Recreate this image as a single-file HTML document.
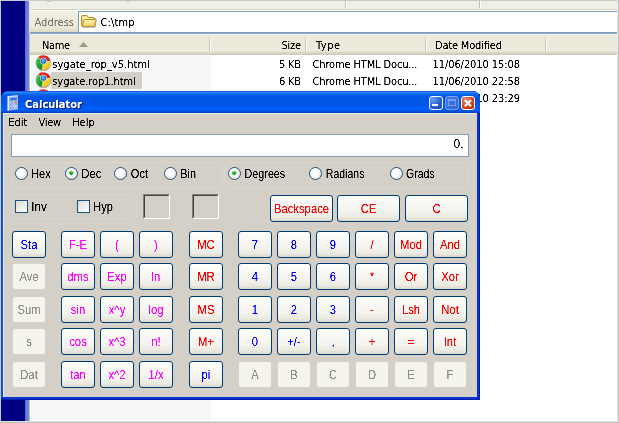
<!DOCTYPE html>
<html><head><meta charset="utf-8"><title>Calculator</title>
<style>
html,body{margin:0;padding:0;background:#fff}
body{width:619px;height:423px;position:relative;overflow:hidden}
div{position:absolute}
text{white-space:pre}
</style></head>
<body>
<div style="left:0px;top:0px;width:619px;height:423px;background:#fff"></div>
<div style="left:1px;top:1px;width:24px;height:420px;background:#000080"></div>
<div style="left:25px;top:1px;width:4px;height:420px;background:linear-gradient(90deg,#5a69ce,#7b8ede)"></div>
<div style="left:29px;top:1px;width:1px;height:420px;background:#b4bce8"></div>
<div style="left:29px;top:1px;width:1px;height:33px;background:#dfe0ea"></div>
<div style="left:30px;top:1px;width:587px;height:8px;background:#efefe4"></div>
<div style="left:345px;top:1px;width:1px;height:7px;background:#c5c2b2"></div>
<div style="left:346px;top:1px;width:1px;height:7px;background:#fff"></div>
<div style="left:479px;top:1px;width:1px;height:7px;background:#c5c2b2"></div>
<div style="left:480px;top:1px;width:1px;height:7px;background:#fff"></div>
<div style="left:47px;top:1px;width:4px;height:1px;background:#c4d0bc"></div>
<div style="left:126px;top:1px;width:4px;height:1px;background:#d0d0c4"></div>
<div style="left:30px;top:9px;width:587px;height:1px;background:#d6d2bd"></div>
<div style="left:30px;top:10px;width:587px;height:1px;background:#fff"></div>
<div style="left:30px;top:11px;width:587px;height:21px;background:linear-gradient(#f1efe2,#ece9d8 75%,#ddd9c3)"></div>
<div style="left:78px;top:11px;width:540px;height:22px;background:#fff;border:1px solid #7f9db9;box-sizing:border-box"></div>
<div style="left:30px;top:32px;width:587px;height:1px;background:#7f9db9"></div>
<div style="left:30px;top:33px;width:587px;height:1px;background:#8eaac6"></div>
<div style="left:30px;top:34px;width:587px;height:1px;background:#f5f4ee"></div>
<div style="left:30px;top:35px;width:587px;height:20px;background:linear-gradient(#ebeadb 0,#ebeadb 80%,#e0ddcb 85%,#d6d2c2 92%,#cbc7b8 100%)"></div>
<div style="left:209px;top:38px;width:1px;height:13px;background:#c7c5b2"></div>
<div style="left:210px;top:38px;width:1px;height:13px;background:#fff"></div>
<div style="left:305px;top:38px;width:1px;height:13px;background:#c7c5b2"></div>
<div style="left:306px;top:38px;width:1px;height:13px;background:#fff"></div>
<div style="left:425px;top:38px;width:1px;height:13px;background:#c7c5b2"></div>
<div style="left:426px;top:38px;width:1px;height:13px;background:#fff"></div>
<div style="left:545px;top:38px;width:1px;height:13px;background:#c7c5b2"></div>
<div style="left:546px;top:38px;width:1px;height:13px;background:#fff"></div>
<div style="left:31px;top:55px;width:180px;height:366px;background:#f7f7f7"></div>
<div style="left:51px;top:72px;width:91px;height:17px;background:#d4d0c8"></div>
<svg width="619" height="423" style="position:absolute;left:0;top:0" font-family='"DejaVu Sans Condensed","Liberation Sans",sans-serif'>
<defs><filter id="fa" x="0" y="0" width="619" height="423" filterUnits="userSpaceOnUse" color-interpolation-filters="sRGB"><feComponentTransfer><feFuncA type="linear" slope="2.5" intercept="-0.6"/></feComponentTransfer></filter></defs>
<defs><linearGradient id="fg" x1="0" y1="0" x2="0.3" y2="1"><stop offset="0" stop-color="#fffbd6"/><stop offset="1" stop-color="#f3d25c"/></linearGradient><filter id="blur1" x="-30%" y="-30%" width="160%" height="160%"><feGaussianBlur stdDeviation="0.7"/></filter></defs>
<path d="M83.5 18 L95.5 18 Q97 19 96.5 21 L95.5 27.5 L83 27.8 Z" fill="#5a5a78" opacity="0.55" filter="url(#blur1)"/>
<path d="M81.5 17 L81.5 25.5 Q81.5 26.5 82.5 26.5 L94 26.5 L94 18.5 Q94 17.5 93 17.5 L88.5 17.5 L87 15.5 L82.5 15.5 Q81.5 15.5 81.5 16.5 Z" fill="#f0cf60" stroke="#b8891c" stroke-width="1"/>
<path d="M82.5 16.5 L86.7 16.5 L88 18.5 L93 18.5 L93 19.5 L82.5 19.5 Z" fill="#fff4b8"/>
<path d="M84.3 19.5 L95.3 19.5 Q96.3 19.5 96 20.5 L94.6 25.8 Q94.4 26.5 93.6 26.5 L82.4 26.5 Z" fill="url(#fg)" stroke="#bf9526" stroke-width="1"/>
<path d="M79 47 L83.5 42 L88 47 Z" fill="#9d9a8c"/>
<defs><filter id="blur2" x="-30%" y="-30%" width="160%" height="160%"><feGaussianBlur stdDeviation="0.6"/></filter><linearGradient id="cr" x1="0" y1="0" x2="0" y2="1"><stop offset="0" stop-color="#f0302a"/><stop offset="1" stop-color="#c80c0c"/></linearGradient><linearGradient id="cg" x1="0" y1="0" x2="1" y2="0.6"><stop offset="0" stop-color="#7fd06a"/><stop offset="0.45" stop-color="#2fae3a"/><stop offset="1" stop-color="#168a2a"/></linearGradient><linearGradient id="cy" x1="0" y1="0" x2="0.6" y2="1"><stop offset="0" stop-color="#fbe23a"/><stop offset="1" stop-color="#efc010"/></linearGradient><radialGradient id="cb" cx="0.4" cy="0.35" r="0.7"><stop offset="0" stop-color="#7cc4ff"/><stop offset="1" stop-color="#1f78e0"/></radialGradient></defs>
<g transform="translate(43.2,62.7)"><ellipse cx="0.3" cy="0.9" rx="7.7" ry="7.5" fill="#777" opacity="0.6" filter="url(#blur2)"/><path d="M0.2 -1.6 L-5.41 -5.05 A7.4 7.4 0 0 1 7.24 -1.54 Z" fill="url(#cr)"/><path d="M0.2 -1.6 L-5.41 -5.05 A7.4 7.4 0 0 0 -1.03 7.33 Z" fill="url(#cg)"/><path d="M0.2 -1.6 L-1.03 7.33 A7.4 7.4 0 0 0 7.24 -1.54 Z" fill="url(#cy)"/><path d="M0.2 -1.6 L-5.41 -5.05 M0.2 -1.6 L7.24 -1.54 M0.2 -1.6 L-1.03 7.33" stroke="#e8e8e0" stroke-width="0.7" opacity="0.8"/><circle cx="0.2" cy="-1.6" r="3.3" fill="#dfe6ea"/><circle cx="0.2" cy="-1.6" r="2.7" fill="#1c4fa8"/><circle cx="0.2" cy="-1.6" r="2.1" fill="url(#cb)"/></g>
<g transform="translate(43.2,79.7)"><ellipse cx="0.3" cy="0.9" rx="7.7" ry="7.5" fill="#777" opacity="0.6" filter="url(#blur2)"/><path d="M0.2 -1.6 L-5.41 -5.05 A7.4 7.4 0 0 1 7.24 -1.54 Z" fill="url(#cr)"/><path d="M0.2 -1.6 L-5.41 -5.05 A7.4 7.4 0 0 0 -1.03 7.33 Z" fill="url(#cg)"/><path d="M0.2 -1.6 L-1.03 7.33 A7.4 7.4 0 0 0 7.24 -1.54 Z" fill="url(#cy)"/><path d="M0.2 -1.6 L-5.41 -5.05 M0.2 -1.6 L7.24 -1.54 M0.2 -1.6 L-1.03 7.33" stroke="#e8e8e0" stroke-width="0.7" opacity="0.8"/><circle cx="0.2" cy="-1.6" r="3.3" fill="#dfe6ea"/><circle cx="0.2" cy="-1.6" r="2.7" fill="#1c4fa8"/><circle cx="0.2" cy="-1.6" r="2.1" fill="url(#cb)"/></g>
<g transform="translate(43.2,96.7)"><ellipse cx="0.3" cy="0.9" rx="7.7" ry="7.5" fill="#777" opacity="0.6" filter="url(#blur2)"/><path d="M0.2 -1.6 L-5.41 -5.05 A7.4 7.4 0 0 1 7.24 -1.54 Z" fill="url(#cr)"/><path d="M0.2 -1.6 L-5.41 -5.05 A7.4 7.4 0 0 0 -1.03 7.33 Z" fill="url(#cg)"/><path d="M0.2 -1.6 L-1.03 7.33 A7.4 7.4 0 0 0 7.24 -1.54 Z" fill="url(#cy)"/><path d="M0.2 -1.6 L-5.41 -5.05 M0.2 -1.6 L7.24 -1.54 M0.2 -1.6 L-1.03 7.33" stroke="#e8e8e0" stroke-width="0.7" opacity="0.8"/><circle cx="0.2" cy="-1.6" r="3.3" fill="#dfe6ea"/><circle cx="0.2" cy="-1.6" r="2.7" fill="#1c4fa8"/><circle cx="0.2" cy="-1.6" r="2.1" fill="url(#cb)"/></g>
<g filter="url(#fa)">
<text x="34.5" y="26.2" font-size="11" fill="#7f7c73" textLength="39.5" lengthAdjust="spacing">Address</text>
<text x="100.5" y="26.2" font-size="11" fill="#000" textLength="34" lengthAdjust="spacing">C:\tmp</text>
<text x="42" y="48.7" font-size="11" fill="#000" textLength="28" lengthAdjust="spacing">Name</text>
<text x="281.5" y="48.7" font-size="11" fill="#000" textLength="19.5" lengthAdjust="spacing">Size</text>
<text x="316" y="48.7" font-size="11" fill="#000" textLength="24" lengthAdjust="spacing">Type</text>
<text x="435" y="48.7" font-size="11" fill="#000" textLength="67" lengthAdjust="spacing">Date Modified</text>
<text x="52.3" y="67.7" font-size="11" fill="#000" textLength="97.5" lengthAdjust="spacing">sygate_rop_v5.html</text>
<text x="279" y="67.7" font-size="11" fill="#000" textLength="22" lengthAdjust="spacing">5 KB</text>
<text x="312.5" y="67.7" font-size="11" fill="#000" textLength="105" lengthAdjust="spacing">Chrome HTML Docu...</text>
<text x="432.5" y="67.7" font-size="11" fill="#000" textLength="87.5" lengthAdjust="spacing">11/06/2010 15:08</text>
<text x="52.3" y="84.7" font-size="11" fill="#000" textLength="83.5" lengthAdjust="spacing">sygate.rop1.html</text>
<text x="279" y="84.7" font-size="11" fill="#000" textLength="22" lengthAdjust="spacing">6 KB</text>
<text x="312.5" y="84.7" font-size="11" fill="#000" textLength="105" lengthAdjust="spacing">Chrome HTML Docu...</text>
<text x="432.5" y="84.7" font-size="11" fill="#000" textLength="87.5" lengthAdjust="spacing">11/06/2010 22:58</text>
<text x="432.5" y="101.7" font-size="11" fill="#000" textLength="87.5" lengthAdjust="spacing">11/06/2010 23:29</text>
</g>
</svg>
<div style="left:1px;top:91px;width:479px;height:309px;background:#0831d9;border-radius:7px 7px 0 0"></div>
<div style="left:479px;top:99px;width:1px;height:301px;background:#001ea0"></div>
<div style="left:1px;top:399px;width:479px;height:1px;background:#001ea0"></div>
<div style="left:1px;top:113px;width:2px;height:285px;background:#0851e4"></div>
<div style="left:1px;top:91px;width:479px;height:22px;border-radius:7px 7px 0 0;background:linear-gradient(#0048d8 0%,#3488f8 6%,#1a76f8 10%,#0560ea 18%,#0054e3 30%,#0055e6 55%,#005cf3 75%,#0060f5 85%,#0050dd 93%,#0042c0 100%)"></div>
<div style="left:3px;top:113px;width:474px;height:284px;background:#d4d0c8;box-sizing:border-box;border-left:1px solid #ece9d8;border-top:1px solid #ece9d8"></div>
<div style="left:429px;top:96px;width:14px;height:14px;background:radial-gradient(circle at 25% 20%,#6a9ff8,#2a5fe0 55%,#1a45c0);border:1px solid #fff;border-radius:3px;box-sizing:border-box"></div>
<div style="left:445px;top:96px;width:14px;height:14px;background:linear-gradient(135deg,#3e7ef0,#2a63d8);border:1px solid #7f9fee;border-radius:3px;box-sizing:border-box"></div>
<div style="left:461px;top:96px;width:14px;height:14px;background:radial-gradient(circle at 30% 25%,#e88a6a,#d8441c 55%,#b02a08);border:1px solid #fff;border-radius:3px;box-sizing:border-box"></div>
<div style="left:432px;top:104px;width:5.5px;height:2px;background:#fff"></div>
<div style="left:448px;top:99px;width:8px;height:7px;border:1px solid #7f9fe8;border-top-width:2px;box-sizing:border-box"></div>
<svg width="14" height="14" style="position:absolute;left:461px;top:96px"><path d="M3.8 4.1 L10.1 10.2 M10.1 4.1 L3.8 10.2" stroke="#fff" stroke-width="2.1" fill="none"/></svg>
<div style="left:11px;top:134px;width:458px;height:23px;background:#fff;border:1px solid #7f9db9;box-sizing:border-box"></div>
<div style="left:11px;top:161.5px;width:212px;height:26px;border:1px solid #d9d7c9;border-radius:4px;box-sizing:border-box"></div>
<div style="left:224px;top:161.5px;width:245px;height:26px;border:1px solid #d9d7c9;border-radius:4px;box-sizing:border-box"></div>
<div style="left:12px;top:194px;width:125px;height:25px;border:1px solid #d9d7c9;border-radius:4px;box-sizing:border-box"></div>
<div style="left:143px;top:194px;width:27px;height:25px;box-sizing:border-box;border:1px solid;border-color:#808080 #fff #fff #808080"></div>
<div style="left:144px;top:195px;width:25px;height:23px;box-sizing:border-box;border:1px solid;border-color:#404040 #d4d0c8 #d4d0c8 #404040"></div>
<div style="left:192px;top:194px;width:27px;height:25px;box-sizing:border-box;border:1px solid;border-color:#808080 #fff #fff #808080"></div>
<div style="left:193px;top:195px;width:25px;height:23px;box-sizing:border-box;border:1px solid;border-color:#404040 #d4d0c8 #d4d0c8 #404040"></div>
<div style="left:15.0px;top:167.0px;width:13px;height:13px;border-radius:50%;border:1px solid #1d5180;box-sizing:border-box;background:radial-gradient(circle at 35% 35%,#fff 35%,#dddbd0 100%)"></div>
<div style="left:65.0px;top:167.0px;width:13px;height:13px;border-radius:50%;border:1px solid #1d5180;box-sizing:border-box;background:radial-gradient(circle at 35% 35%,#fff 35%,#dddbd0 100%)"></div>
<div style="left:69.3px;top:171.3px;width:4.4px;height:4.4px;border-radius:1px;transform:rotate(45deg);background:linear-gradient(135deg,#8fe87c,#2bb52b 45%,#1f9f1f)"></div>
<div style="left:114.0px;top:167.0px;width:13px;height:13px;border-radius:50%;border:1px solid #1d5180;box-sizing:border-box;background:radial-gradient(circle at 35% 35%,#fff 35%,#dddbd0 100%)"></div>
<div style="left:164.0px;top:167.0px;width:13px;height:13px;border-radius:50%;border:1px solid #1d5180;box-sizing:border-box;background:radial-gradient(circle at 35% 35%,#fff 35%,#dddbd0 100%)"></div>
<div style="left:228.0px;top:167.0px;width:13px;height:13px;border-radius:50%;border:1px solid #1d5180;box-sizing:border-box;background:radial-gradient(circle at 35% 35%,#fff 35%,#dddbd0 100%)"></div>
<div style="left:232.3px;top:171.3px;width:4.4px;height:4.4px;border-radius:1px;transform:rotate(45deg);background:linear-gradient(135deg,#8fe87c,#2bb52b 45%,#1f9f1f)"></div>
<div style="left:309.0px;top:167.0px;width:13px;height:13px;border-radius:50%;border:1px solid #1d5180;box-sizing:border-box;background:radial-gradient(circle at 35% 35%,#fff 35%,#dddbd0 100%)"></div>
<div style="left:390.0px;top:167.0px;width:13px;height:13px;border-radius:50%;border:1px solid #1d5180;box-sizing:border-box;background:radial-gradient(circle at 35% 35%,#fff 35%,#dddbd0 100%)"></div>
<div style="left:15px;top:200px;width:13px;height:13px;border:1px solid #1d5180;box-sizing:border-box;background:linear-gradient(135deg,#dcdcd4,#fff)"></div>
<div style="left:77px;top:200px;width:13px;height:13px;border:1px solid #1d5180;box-sizing:border-box;background:linear-gradient(135deg,#dcdcd4,#fff)"></div>
<div style="left:12px;top:231px;width:34px;height:27px;box-sizing:border-box;border:1px solid #003c74;border-radius:3px;background:linear-gradient(#fdfdfb 0%,#f5f4ef 55%,#ecebe2 85%,#dad6ca 100%)"></div>
<div style="left:61px;top:231px;width:34px;height:27px;box-sizing:border-box;border:1px solid #003c74;border-radius:3px;background:linear-gradient(#fdfdfb 0%,#f5f4ef 55%,#ecebe2 85%,#dad6ca 100%)"></div>
<div style="left:100px;top:231px;width:34px;height:27px;box-sizing:border-box;border:1px solid #003c74;border-radius:3px;background:linear-gradient(#fdfdfb 0%,#f5f4ef 55%,#ecebe2 85%,#dad6ca 100%)"></div>
<div style="left:139px;top:231px;width:34px;height:27px;box-sizing:border-box;border:1px solid #003c74;border-radius:3px;background:linear-gradient(#fdfdfb 0%,#f5f4ef 55%,#ecebe2 85%,#dad6ca 100%)"></div>
<div style="left:189px;top:231px;width:34px;height:27px;box-sizing:border-box;border:1px solid #003c74;border-radius:3px;background:linear-gradient(#fdfdfb 0%,#f5f4ef 55%,#ecebe2 85%,#dad6ca 100%)"></div>
<div style="left:238px;top:231px;width:34px;height:27px;box-sizing:border-box;border:1px solid #003c74;border-radius:3px;background:linear-gradient(#fdfdfb 0%,#f5f4ef 55%,#ecebe2 85%,#dad6ca 100%)"></div>
<div style="left:277px;top:231px;width:34px;height:27px;box-sizing:border-box;border:1px solid #003c74;border-radius:3px;background:linear-gradient(#fdfdfb 0%,#f5f4ef 55%,#ecebe2 85%,#dad6ca 100%)"></div>
<div style="left:316px;top:231px;width:34px;height:27px;box-sizing:border-box;border:1px solid #003c74;border-radius:3px;background:linear-gradient(#fdfdfb 0%,#f5f4ef 55%,#ecebe2 85%,#dad6ca 100%)"></div>
<div style="left:355px;top:231px;width:34px;height:27px;box-sizing:border-box;border:1px solid #003c74;border-radius:3px;background:linear-gradient(#fdfdfb 0%,#f5f4ef 55%,#ecebe2 85%,#dad6ca 100%)"></div>
<div style="left:394px;top:231px;width:34px;height:27px;box-sizing:border-box;border:1px solid #003c74;border-radius:3px;background:linear-gradient(#fdfdfb 0%,#f5f4ef 55%,#ecebe2 85%,#dad6ca 100%)"></div>
<div style="left:433px;top:231px;width:34px;height:27px;box-sizing:border-box;border:1px solid #003c74;border-radius:3px;background:linear-gradient(#fdfdfb 0%,#f5f4ef 55%,#ecebe2 85%,#dad6ca 100%)"></div>
<div style="left:12px;top:263px;width:34px;height:27px;box-sizing:border-box;border:1px solid #d5d3c4;border-radius:3px;background:#f5f4ea"></div>
<div style="left:61px;top:263px;width:34px;height:27px;box-sizing:border-box;border:1px solid #003c74;border-radius:3px;background:linear-gradient(#fdfdfb 0%,#f5f4ef 55%,#ecebe2 85%,#dad6ca 100%)"></div>
<div style="left:100px;top:263px;width:34px;height:27px;box-sizing:border-box;border:1px solid #003c74;border-radius:3px;background:linear-gradient(#fdfdfb 0%,#f5f4ef 55%,#ecebe2 85%,#dad6ca 100%)"></div>
<div style="left:139px;top:263px;width:34px;height:27px;box-sizing:border-box;border:1px solid #003c74;border-radius:3px;background:linear-gradient(#fdfdfb 0%,#f5f4ef 55%,#ecebe2 85%,#dad6ca 100%)"></div>
<div style="left:189px;top:263px;width:34px;height:27px;box-sizing:border-box;border:1px solid #003c74;border-radius:3px;background:linear-gradient(#fdfdfb 0%,#f5f4ef 55%,#ecebe2 85%,#dad6ca 100%)"></div>
<div style="left:238px;top:263px;width:34px;height:27px;box-sizing:border-box;border:1px solid #003c74;border-radius:3px;background:linear-gradient(#fdfdfb 0%,#f5f4ef 55%,#ecebe2 85%,#dad6ca 100%)"></div>
<div style="left:277px;top:263px;width:34px;height:27px;box-sizing:border-box;border:1px solid #003c74;border-radius:3px;background:linear-gradient(#fdfdfb 0%,#f5f4ef 55%,#ecebe2 85%,#dad6ca 100%)"></div>
<div style="left:316px;top:263px;width:34px;height:27px;box-sizing:border-box;border:1px solid #003c74;border-radius:3px;background:linear-gradient(#fdfdfb 0%,#f5f4ef 55%,#ecebe2 85%,#dad6ca 100%)"></div>
<div style="left:355px;top:263px;width:34px;height:27px;box-sizing:border-box;border:1px solid #003c74;border-radius:3px;background:linear-gradient(#fdfdfb 0%,#f5f4ef 55%,#ecebe2 85%,#dad6ca 100%)"></div>
<div style="left:394px;top:263px;width:34px;height:27px;box-sizing:border-box;border:1px solid #003c74;border-radius:3px;background:linear-gradient(#fdfdfb 0%,#f5f4ef 55%,#ecebe2 85%,#dad6ca 100%)"></div>
<div style="left:433px;top:263px;width:34px;height:27px;box-sizing:border-box;border:1px solid #003c74;border-radius:3px;background:linear-gradient(#fdfdfb 0%,#f5f4ef 55%,#ecebe2 85%,#dad6ca 100%)"></div>
<div style="left:12px;top:296px;width:34px;height:27px;box-sizing:border-box;border:1px solid #d5d3c4;border-radius:3px;background:#f5f4ea"></div>
<div style="left:61px;top:296px;width:34px;height:27px;box-sizing:border-box;border:1px solid #003c74;border-radius:3px;background:linear-gradient(#fdfdfb 0%,#f5f4ef 55%,#ecebe2 85%,#dad6ca 100%)"></div>
<div style="left:100px;top:296px;width:34px;height:27px;box-sizing:border-box;border:1px solid #003c74;border-radius:3px;background:linear-gradient(#fdfdfb 0%,#f5f4ef 55%,#ecebe2 85%,#dad6ca 100%)"></div>
<div style="left:139px;top:296px;width:34px;height:27px;box-sizing:border-box;border:1px solid #003c74;border-radius:3px;background:linear-gradient(#fdfdfb 0%,#f5f4ef 55%,#ecebe2 85%,#dad6ca 100%)"></div>
<div style="left:189px;top:296px;width:34px;height:27px;box-sizing:border-box;border:1px solid #003c74;border-radius:3px;background:linear-gradient(#fdfdfb 0%,#f5f4ef 55%,#ecebe2 85%,#dad6ca 100%)"></div>
<div style="left:238px;top:296px;width:34px;height:27px;box-sizing:border-box;border:1px solid #003c74;border-radius:3px;background:linear-gradient(#fdfdfb 0%,#f5f4ef 55%,#ecebe2 85%,#dad6ca 100%)"></div>
<div style="left:277px;top:296px;width:34px;height:27px;box-sizing:border-box;border:1px solid #003c74;border-radius:3px;background:linear-gradient(#fdfdfb 0%,#f5f4ef 55%,#ecebe2 85%,#dad6ca 100%)"></div>
<div style="left:316px;top:296px;width:34px;height:27px;box-sizing:border-box;border:1px solid #003c74;border-radius:3px;background:linear-gradient(#fdfdfb 0%,#f5f4ef 55%,#ecebe2 85%,#dad6ca 100%)"></div>
<div style="left:355px;top:296px;width:34px;height:27px;box-sizing:border-box;border:1px solid #003c74;border-radius:3px;background:linear-gradient(#fdfdfb 0%,#f5f4ef 55%,#ecebe2 85%,#dad6ca 100%)"></div>
<div style="left:394px;top:296px;width:34px;height:27px;box-sizing:border-box;border:1px solid #003c74;border-radius:3px;background:linear-gradient(#fdfdfb 0%,#f5f4ef 55%,#ecebe2 85%,#dad6ca 100%)"></div>
<div style="left:433px;top:296px;width:34px;height:27px;box-sizing:border-box;border:1px solid #003c74;border-radius:3px;background:linear-gradient(#fdfdfb 0%,#f5f4ef 55%,#ecebe2 85%,#dad6ca 100%)"></div>
<div style="left:12px;top:328px;width:34px;height:27px;box-sizing:border-box;border:1px solid #d5d3c4;border-radius:3px;background:#f5f4ea"></div>
<div style="left:61px;top:328px;width:34px;height:27px;box-sizing:border-box;border:1px solid #003c74;border-radius:3px;background:linear-gradient(#fdfdfb 0%,#f5f4ef 55%,#ecebe2 85%,#dad6ca 100%)"></div>
<div style="left:100px;top:328px;width:34px;height:27px;box-sizing:border-box;border:1px solid #003c74;border-radius:3px;background:linear-gradient(#fdfdfb 0%,#f5f4ef 55%,#ecebe2 85%,#dad6ca 100%)"></div>
<div style="left:139px;top:328px;width:34px;height:27px;box-sizing:border-box;border:1px solid #003c74;border-radius:3px;background:linear-gradient(#fdfdfb 0%,#f5f4ef 55%,#ecebe2 85%,#dad6ca 100%)"></div>
<div style="left:189px;top:328px;width:34px;height:27px;box-sizing:border-box;border:1px solid #003c74;border-radius:3px;background:linear-gradient(#fdfdfb 0%,#f5f4ef 55%,#ecebe2 85%,#dad6ca 100%)"></div>
<div style="left:238px;top:328px;width:34px;height:27px;box-sizing:border-box;border:1px solid #003c74;border-radius:3px;background:linear-gradient(#fdfdfb 0%,#f5f4ef 55%,#ecebe2 85%,#dad6ca 100%)"></div>
<div style="left:277px;top:328px;width:34px;height:27px;box-sizing:border-box;border:1px solid #003c74;border-radius:3px;background:linear-gradient(#fdfdfb 0%,#f5f4ef 55%,#ecebe2 85%,#dad6ca 100%)"></div>
<div style="left:316px;top:328px;width:34px;height:27px;box-sizing:border-box;border:1px solid #003c74;border-radius:3px;background:linear-gradient(#fdfdfb 0%,#f5f4ef 55%,#ecebe2 85%,#dad6ca 100%)"></div>
<div style="left:355px;top:328px;width:34px;height:27px;box-sizing:border-box;border:1px solid #003c74;border-radius:3px;background:linear-gradient(#fdfdfb 0%,#f5f4ef 55%,#ecebe2 85%,#dad6ca 100%)"></div>
<div style="left:394px;top:328px;width:34px;height:27px;box-sizing:border-box;border:1px solid #003c74;border-radius:3px;background:linear-gradient(#fdfdfb 0%,#f5f4ef 55%,#ecebe2 85%,#dad6ca 100%)"></div>
<div style="left:433px;top:328px;width:34px;height:27px;box-sizing:border-box;border:1px solid #003c74;border-radius:3px;background:linear-gradient(#fdfdfb 0%,#f5f4ef 55%,#ecebe2 85%,#dad6ca 100%)"></div>
<div style="left:12px;top:361px;width:34px;height:27px;box-sizing:border-box;border:1px solid #d5d3c4;border-radius:3px;background:#f5f4ea"></div>
<div style="left:61px;top:361px;width:34px;height:27px;box-sizing:border-box;border:1px solid #003c74;border-radius:3px;background:linear-gradient(#fdfdfb 0%,#f5f4ef 55%,#ecebe2 85%,#dad6ca 100%)"></div>
<div style="left:100px;top:361px;width:34px;height:27px;box-sizing:border-box;border:1px solid #003c74;border-radius:3px;background:linear-gradient(#fdfdfb 0%,#f5f4ef 55%,#ecebe2 85%,#dad6ca 100%)"></div>
<div style="left:139px;top:361px;width:34px;height:27px;box-sizing:border-box;border:1px solid #003c74;border-radius:3px;background:linear-gradient(#fdfdfb 0%,#f5f4ef 55%,#ecebe2 85%,#dad6ca 100%)"></div>
<div style="left:189px;top:361px;width:34px;height:27px;box-sizing:border-box;border:1px solid #003c74;border-radius:3px;background:linear-gradient(#fdfdfb 0%,#f5f4ef 55%,#ecebe2 85%,#dad6ca 100%)"></div>
<div style="left:238px;top:361px;width:34px;height:27px;box-sizing:border-box;border:1px solid #d5d3c4;border-radius:3px;background:#f5f4ea"></div>
<div style="left:277px;top:361px;width:34px;height:27px;box-sizing:border-box;border:1px solid #d5d3c4;border-radius:3px;background:#f5f4ea"></div>
<div style="left:316px;top:361px;width:34px;height:27px;box-sizing:border-box;border:1px solid #d5d3c4;border-radius:3px;background:#f5f4ea"></div>
<div style="left:355px;top:361px;width:34px;height:27px;box-sizing:border-box;border:1px solid #d5d3c4;border-radius:3px;background:#f5f4ea"></div>
<div style="left:394px;top:361px;width:34px;height:27px;box-sizing:border-box;border:1px solid #d5d3c4;border-radius:3px;background:#f5f4ea"></div>
<div style="left:433px;top:361px;width:34px;height:27px;box-sizing:border-box;border:1px solid #d5d3c4;border-radius:3px;background:#f5f4ea"></div>
<div style="left:270px;top:195px;width:63px;height:27px;box-sizing:border-box;border:1px solid #003c74;border-radius:3px;background:linear-gradient(#fdfdfb 0%,#f5f4ef 55%,#ecebe2 85%,#dad6ca 100%)"></div>
<div style="left:337px;top:195px;width:63px;height:27px;box-sizing:border-box;border:1px solid #003c74;border-radius:3px;background:linear-gradient(#fdfdfb 0%,#f5f4ef 55%,#ecebe2 85%,#dad6ca 100%)"></div>
<div style="left:405px;top:195px;width:63px;height:27px;box-sizing:border-box;border:1px solid #003c74;border-radius:3px;background:linear-gradient(#fdfdfb 0%,#f5f4ef 55%,#ecebe2 85%,#dad6ca 100%)"></div>
<svg width="619" height="423" style="position:absolute;left:0;top:0" font-family='"Liberation Sans",sans-serif'>
<defs><filter id="fb" x="0" y="0" width="619" height="423" filterUnits="userSpaceOnUse" color-interpolation-filters="sRGB"><feComponentTransfer><feFuncA type="linear" slope="2.5" intercept="-0.6"/></feComponentTransfer></filter></defs>
<g><path d="M7.6 96.2 L18 95.3 L18 109.6 L7.6 110.8 Z" fill="#9cb6ec"/><path d="M7.6 96.2 L9 96.1 L9 110.6 L7.6 110.8 Z" fill="#e4ecff"/><path d="M9 96.1 L18 95.3 L18 96.3 L9 97.1 Z" fill="#d5e2ff"/><path d="M10.2 98.2 L16.8 97.6 L16.8 100 L10.2 100.6 Z" fill="#3f6fd4"/><rect x="14.8" y="101.2" width="2" height="1.9" fill="#f58220"/><g fill="#f4f7ff"><rect x="10.4" y="102" width="1.2" height="1.2"/><rect x="12.6" y="101.9" width="1.2" height="1.2"/><rect x="11.5" y="103.7" width="1.2" height="1.2"/><rect x="13.7" y="103.8" width="1.2" height="1.2"/><rect x="10.4" y="105.6" width="1.2" height="1.2"/><rect x="12.6" y="105.5" width="1.2" height="1.2"/><rect x="15.2" y="105.2" width="1.2" height="1.2"/><rect x="11.5" y="107.4" width="1.2" height="1.2"/><rect x="13.9" y="107.2" width="1.2" height="1.2"/></g><g fill="#5a80d8"><rect x="11.5" y="102" width="1.1" height="1.2"/><rect x="10.4" y="103.8" width="1.1" height="1.2"/><rect x="12.7" y="103.7" width="1" height="1.2"/><rect x="11.6" y="105.6" width="1" height="1.2"/><rect x="15.2" y="103.6" width="1.2" height="1.2"/><rect x="10.4" y="107.5" width="1.1" height="1.2"/><rect x="12.7" y="107.3" width="1.1" height="1.2"/></g></g>
<g filter="url(#fb)">
<text x="0" y="0" font-size="12" fill="#0000ff" text-anchor="middle" transform="translate(29,248.8) scale(0.94,1)">Sta</text>
<text x="0" y="0" font-size="12" fill="#ff00ff" text-anchor="middle" transform="translate(78,248.8) scale(0.94,1)">F-E</text>
<text x="0" y="0" font-size="12" fill="#ff00ff" text-anchor="middle" transform="translate(117,248.8) scale(0.94,1)">(</text>
<text x="0" y="0" font-size="12" fill="#ff00ff" text-anchor="middle" transform="translate(156,248.8) scale(0.94,1)">)</text>
<text x="0" y="0" font-size="12" fill="#ff0000" text-anchor="middle" transform="translate(206,248.8) scale(0.94,1)">MC</text>
<text x="0" y="0" font-size="12" fill="#0000ff" text-anchor="middle" transform="translate(255,248.8) scale(0.94,1)">7</text>
<text x="0" y="0" font-size="12" fill="#0000ff" text-anchor="middle" transform="translate(294,248.8) scale(0.94,1)">8</text>
<text x="0" y="0" font-size="12" fill="#0000ff" text-anchor="middle" transform="translate(333,248.8) scale(0.94,1)">9</text>
<text x="0" y="0" font-size="12" fill="#ff0000" text-anchor="middle" transform="translate(372,248.8) scale(0.94,1)">/</text>
<text x="0" y="0" font-size="12" fill="#ff0000" text-anchor="middle" transform="translate(411,248.8) scale(0.94,1)">Mod</text>
<text x="0" y="0" font-size="12" fill="#ff0000" text-anchor="middle" transform="translate(450,248.8) scale(0.94,1)">And</text>
<text x="0" y="0" font-size="12" fill="#8e8e86" text-anchor="middle" transform="translate(29,280.8) scale(0.94,1)">Ave</text>
<text x="0" y="0" font-size="12" fill="#ff00ff" text-anchor="middle" transform="translate(78,280.8) scale(0.94,1)">dms</text>
<text x="0" y="0" font-size="12" fill="#ff00ff" text-anchor="middle" transform="translate(117,280.8) scale(0.94,1)">Exp</text>
<text x="0" y="0" font-size="12" fill="#ff00ff" text-anchor="middle" transform="translate(156,280.8) scale(0.94,1)">ln</text>
<text x="0" y="0" font-size="12" fill="#ff0000" text-anchor="middle" transform="translate(206,280.8) scale(0.94,1)">MR</text>
<text x="0" y="0" font-size="12" fill="#0000ff" text-anchor="middle" transform="translate(255,280.8) scale(0.94,1)">4</text>
<text x="0" y="0" font-size="12" fill="#0000ff" text-anchor="middle" transform="translate(294,280.8) scale(0.94,1)">5</text>
<text x="0" y="0" font-size="12" fill="#0000ff" text-anchor="middle" transform="translate(333,280.8) scale(0.94,1)">6</text>
<text x="0" y="0" font-size="12" fill="#ff0000" text-anchor="middle" transform="translate(372,280.8) scale(0.94,1)">*</text>
<text x="0" y="0" font-size="12" fill="#ff0000" text-anchor="middle" transform="translate(411,280.8) scale(0.94,1)">Or</text>
<text x="0" y="0" font-size="12" fill="#ff0000" text-anchor="middle" transform="translate(450,280.8) scale(0.94,1)">Xor</text>
<text x="0" y="0" font-size="12" fill="#8e8e86" text-anchor="middle" transform="translate(29,313.8) scale(0.94,1)">Sum</text>
<text x="0" y="0" font-size="12" fill="#ff00ff" text-anchor="middle" transform="translate(78,313.8) scale(0.94,1)">sin</text>
<text x="0" y="0" font-size="12" fill="#ff00ff" text-anchor="middle" transform="translate(117,313.8) scale(0.94,1)">x^y</text>
<text x="0" y="0" font-size="12" fill="#ff00ff" text-anchor="middle" transform="translate(156,313.8) scale(0.94,1)">log</text>
<text x="0" y="0" font-size="12" fill="#ff0000" text-anchor="middle" transform="translate(206,313.8) scale(0.94,1)">MS</text>
<text x="0" y="0" font-size="12" fill="#0000ff" text-anchor="middle" transform="translate(255,313.8) scale(0.94,1)">1</text>
<text x="0" y="0" font-size="12" fill="#0000ff" text-anchor="middle" transform="translate(294,313.8) scale(0.94,1)">2</text>
<text x="0" y="0" font-size="12" fill="#0000ff" text-anchor="middle" transform="translate(333,313.8) scale(0.94,1)">3</text>
<text x="0" y="0" font-size="12" fill="#ff0000" text-anchor="middle" transform="translate(372,313.8) scale(0.94,1)">-</text>
<text x="0" y="0" font-size="12" fill="#ff0000" text-anchor="middle" transform="translate(411,313.8) scale(0.94,1)">Lsh</text>
<text x="0" y="0" font-size="12" fill="#ff0000" text-anchor="middle" transform="translate(450,313.8) scale(0.94,1)">Not</text>
<text x="0" y="0" font-size="12" fill="#8e8e86" text-anchor="middle" transform="translate(29,345.8) scale(0.94,1)">s</text>
<text x="0" y="0" font-size="12" fill="#ff00ff" text-anchor="middle" transform="translate(78,345.8) scale(0.94,1)">cos</text>
<text x="0" y="0" font-size="12" fill="#ff00ff" text-anchor="middle" transform="translate(117,345.8) scale(0.94,1)">x^3</text>
<text x="0" y="0" font-size="12" fill="#ff00ff" text-anchor="middle" transform="translate(156,345.8) scale(0.94,1)">n!</text>
<text x="0" y="0" font-size="12" fill="#ff0000" text-anchor="middle" transform="translate(206,345.8) scale(0.94,1)">M+</text>
<text x="0" y="0" font-size="12" fill="#0000ff" text-anchor="middle" transform="translate(255,345.8) scale(0.94,1)">0</text>
<text x="0" y="0" font-size="12" fill="#0000ff" text-anchor="middle" transform="translate(294,345.8) scale(0.94,1)">+/-</text>
<text x="0" y="0" font-size="12" fill="#0000ff" text-anchor="middle" transform="translate(333,345.8) scale(0.94,1)">,</text>
<text x="0" y="0" font-size="12" fill="#ff0000" text-anchor="middle" transform="translate(372,345.8) scale(0.94,1)">+</text>
<text x="0" y="0" font-size="12" fill="#ff0000" text-anchor="middle" transform="translate(411,345.8) scale(0.94,1)">=</text>
<text x="0" y="0" font-size="12" fill="#ff0000" text-anchor="middle" transform="translate(450,345.8) scale(0.94,1)">Int</text>
<text x="0" y="0" font-size="12" fill="#8e8e86" text-anchor="middle" transform="translate(29,378.8) scale(0.94,1)">Dat</text>
<text x="0" y="0" font-size="12" fill="#ff00ff" text-anchor="middle" transform="translate(78,378.8) scale(0.94,1)">tan</text>
<text x="0" y="0" font-size="12" fill="#ff00ff" text-anchor="middle" transform="translate(117,378.8) scale(0.94,1)">x^2</text>
<text x="0" y="0" font-size="12" fill="#ff00ff" text-anchor="middle" transform="translate(156,378.8) scale(0.94,1)">1/x</text>
<text x="0" y="0" font-size="12" fill="#0000ff" text-anchor="middle" transform="translate(206,378.8) scale(0.94,1)">pi</text>
<text x="0" y="0" font-size="12" fill="#8e8e86" text-anchor="middle" transform="translate(255,378.8) scale(0.94,1)">A</text>
<text x="0" y="0" font-size="12" fill="#8e8e86" text-anchor="middle" transform="translate(294,378.8) scale(0.94,1)">B</text>
<text x="0" y="0" font-size="12" fill="#8e8e86" text-anchor="middle" transform="translate(333,378.8) scale(0.94,1)">C</text>
<text x="0" y="0" font-size="12" fill="#8e8e86" text-anchor="middle" transform="translate(372,378.8) scale(0.94,1)">D</text>
<text x="0" y="0" font-size="12" fill="#8e8e86" text-anchor="middle" transform="translate(411,378.8) scale(0.94,1)">E</text>
<text x="0" y="0" font-size="12" fill="#8e8e86" text-anchor="middle" transform="translate(450,378.8) scale(0.94,1)">F</text>
<text x="0" y="0" font-size="12" fill="#ff0000" text-anchor="middle" transform="translate(301.5,213.2) scale(0.94,1)">Backspace</text>
<text x="0" y="0" font-size="12" fill="#ff0000" text-anchor="middle" transform="translate(368.5,213.2) scale(0.94,1)">CE</text>
<text x="0" y="0" font-size="12" fill="#ff0000" text-anchor="middle" transform="translate(436.5,213.2) scale(0.94,1)">C</text>
<text x="26" y="109" font-size="11" fill="#0a1e82" font-family='"DejaVu Sans Condensed","Liberation Sans",sans-serif' textLength="57" lengthAdjust="spacing" font-weight="bold">Calculator</text>
<text x="25" y="108" font-size="11" fill="#fff" font-family='"DejaVu Sans Condensed","Liberation Sans",sans-serif' textLength="57" lengthAdjust="spacing" font-weight="bold">Calculator</text>
<text x="8.2" y="125.5" font-size="11" fill="#000" font-family='"DejaVu Sans Condensed","Liberation Sans",sans-serif' textLength="19" lengthAdjust="spacing">Edit</text>
<text x="38.5" y="125.5" font-size="11" fill="#000" font-family='"DejaVu Sans Condensed","Liberation Sans",sans-serif' textLength="22.5" lengthAdjust="spacing">View</text>
<text x="72.2" y="125.5" font-size="11" fill="#000" font-family='"DejaVu Sans Condensed","Liberation Sans",sans-serif' textLength="22.5" lengthAdjust="spacing">Help</text>
<text x="453.5" y="147.7" font-size="12" fill="#000" textLength="10" lengthAdjust="spacingAndGlyphs">0,</text>
<text x="31.2" y="177.8" font-size="12" fill="#000" textLength="19.5" lengthAdjust="spacingAndGlyphs">Hex</text>
<text x="81.2" y="177.8" font-size="12" fill="#000" textLength="20.3" lengthAdjust="spacingAndGlyphs">Dec</text>
<text x="130.8" y="177.8" font-size="12" fill="#000" textLength="17.2" lengthAdjust="spacingAndGlyphs">Oct</text>
<text x="180.3" y="177.8" font-size="12" fill="#000" textLength="15.8" lengthAdjust="spacingAndGlyphs">Bin</text>
<text x="244.6" y="177.8" font-size="12" fill="#000" textLength="40.6" lengthAdjust="spacingAndGlyphs">Degrees</text>
<text x="325.8" y="177.8" font-size="12" fill="#000" textLength="38.6" lengthAdjust="spacingAndGlyphs">Radians</text>
<text x="406" y="177.8" font-size="12" fill="#000" textLength="28.6" lengthAdjust="spacingAndGlyphs">Grads</text>
<text x="31.3" y="211" font-size="12" fill="#000" textLength="15.6" lengthAdjust="spacingAndGlyphs">Inv</text>
<text x="93.2" y="211" font-size="12" fill="#000" textLength="19.6" lengthAdjust="spacingAndGlyphs">Hyp</text>
</g>
</svg>
<div style="left:0px;top:0px;width:619px;height:1px;background:#c8c8c8"></div>
<div style="left:0px;top:0px;width:1px;height:423px;background:#c8c8c8"></div>
<div style="left:617px;top:0px;width:1px;height:423px;background:#ececec"></div>
<div style="left:618px;top:0px;width:1px;height:423px;background:#bcbcbc"></div>
<div style="left:0px;top:421px;width:619px;height:1px;background:#dedede;opacity:0.8"></div>
<div style="left:0px;top:422px;width:619px;height:1px;background:#bcbcbc"></div>
</body></html>
